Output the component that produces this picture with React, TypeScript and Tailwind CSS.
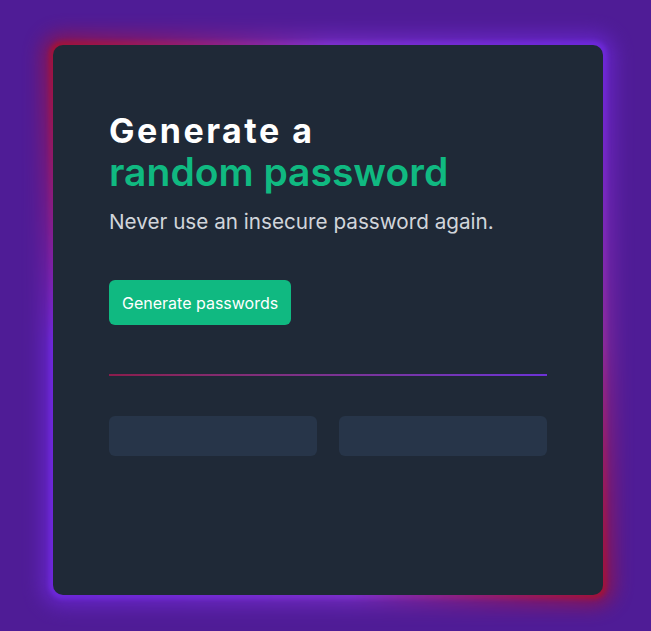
export default function App() {
  // glow colours around the card
  const glow =
    "conic-gradient(from 0deg, #7b2fc9 0deg, #6d28d9 45deg, #8a2a9a 95deg, #9f1239 135deg, #7b2fc9 175deg, #6d28d9 225deg, #6d28d9 265deg, #9f1239 315deg, #7b2fc9 360deg)";

  return (
    <div
      className="h-[631px] w-full bg-[#4f1c96] pl-[53px] pt-[45px] overflow-hidden"
      style={{ fontFamily: "Inter, 'Noto Sans', sans-serif" }}
    >
      <div className="relative w-[550px] h-[550px]">
        {/* Glow */}
        <div
          className="absolute -inset-[10px] rounded-[18px] blur-[10px] opacity-80"
          style={{ background: glow }}
        />
        <div
          className="absolute -inset-[4px] rounded-[14px] blur-[2px]"
          style={{ background: glow }}
        />

        {/* Card */}
        <div className="relative h-full w-full rounded-[10px] bg-[#1f2937] px-[56px] pt-[67px]">
          {/* Title */}
          <h1>
            <span className="block text-[34px] leading-[38px] font-bold text-white tracking-[2.5px]">
              Generate a
            </span>
            <span className="block text-[39px] leading-[44px] font-semibold text-[#10b981]">
              random password
            </span>
          </h1>

          {/* Subtitle */}
          <p className="mt-[14px] text-[20.7px] leading-[28px] text-[#d1d5db]">
            Never use an insecure password again.
          </p>

          {/* Button */}
          <button className="mt-[44px] h-[45px] px-[13px] rounded-md bg-[#10b981] text-white text-[16px] leading-6">
            Generate passwords
          </button>

          {/* Divider */}
          <div className="mt-[49px] h-[2px] w-full bg-gradient-to-r from-[#8b1c4c] to-[#6d32d6]" />

          {/* Password boxes */}
          <div className="mt-[40px] grid grid-cols-2 gap-[22px]">
            <div className="h-[40px] rounded-md bg-[#273549]" />
            <div className="h-[40px] rounded-md bg-[#273549]" />
          </div>
        </div>
      </div>
    </div>
  );
}
